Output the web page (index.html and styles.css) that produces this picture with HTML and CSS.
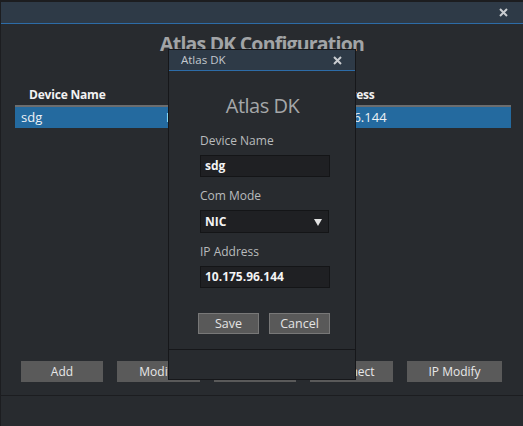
FILE: index.html
```html
<!DOCTYPE html>
<html>
<head>
<meta charset="utf-8">
<link rel="stylesheet" href="styles.css">
</head>
<body>
<div class="window">
  <div class="titlebar">
    <span class="close"><svg width="9" height="9" viewBox="0 0 9 9"><path d="M1 1L8 8M8 1L1 8" stroke="#c9ccd0" stroke-width="2"/></svg></span>
  </div>
  <div class="main">
    <h1 class="main-title">Atlas DK Configuration</h1>
    <div class="table">
      <div class="thead">
        <div class="c1">Device Name</div>
        <div class="c2">Com Mode</div>
        <div class="c3">IP Address</div>
      </div>
      <div class="trow">
        <div class="c1">sdg</div>
        <div class="c2">NIC</div>
        <div class="c3">10.175.96.144</div>
      </div>
    </div>
    <div class="actions">
      <button class="btn w82">Add</button>
      <button class="btn w83">Modify</button>
      <button class="btn w82">Delete</button>
      <button class="btn w83">Connect</button>
      <button class="btn w95">IP Modify</button>
    </div>
  </div>
  <div class="statusbar"></div>

  <div class="dialog">
    <div class="dlg-title">
      <span class="dlg-name">Atlas DK</span>
      <span class="close small"><svg width="9" height="9" viewBox="0 0 9 9"><path d="M1 1L8 8M8 1L1 8" stroke="#c9ccd0" stroke-width="2"/></svg></span>
    </div>
    <div class="dlg-body">
      <h2 class="dlg-heading">Atlas DK</h2>
      <div class="label first">Device Name</div>
      <div class="field">sdg</div>
      <div class="label">Com Mode</div>
      <div class="field select">NIC<span class="arrow"></span></div>
      <div class="label">IP Address</div>
      <div class="field">10.175.96.144</div>
      <div class="dlg-buttons">
        <button class="dbtn">Save</button>
        <button class="dbtn">Cancel</button>
      </div>
    </div>
    <div class="dlg-footer"></div>
  </div>
</div>
</body>
</html>
```

FILE: styles.css
```css
* { box-sizing: border-box; }
html, body { margin: 0; padding: 0; }
body {
  background: #282b2f;
  font-family: "Open Sans", "Noto Sans", sans-serif;
  width: 523px;
  height: 426px;
  overflow: hidden;
}
.window {
  position: relative;
  width: 523px;
  height: 426px;
  border-top: 2px solid #1c1d20;
  border-left: 1px solid #1c1d20;
  display: flex;
  flex-direction: column;
}
.titlebar {
  height: 22px;
  background: #2e3a47;
  border-bottom: 1px solid #2d6ca8;
  display: flex;
  align-items: center;
  justify-content: flex-end;
  padding-right: 15px;
  flex: none;
}
.close { display: flex; align-items: center; }
.main {
  flex: 1;
  display: flex;
  flex-direction: column;
  border-bottom: 1px solid #1c1d20;
}
.main-title {
  margin: 6px 0 0;
  font-size: 19.5px;
  letter-spacing: -0.8px;
  line-height: 28px;
  font-weight: 700;
  color: #a2a4a6;
  text-align: center;
}
.table {
  margin: 26px 12px 0 14px;
}
.thead, .trow { display: flex; }
.thead {
  height: 23px;
  border-bottom: 2px solid #6c6d6e;
  font-size: 12px;
  letter-spacing: -0.2px;
  font-weight: 700;
  line-height: 21px;
  color: #f2f2f2;
}
.thead .c1 { padding-left: 14px; }
.thead .c2 { padding-left: 14px; }
.thead .c3 { padding-left: 24px; }
.trow {
  height: 21px;
  background: #246a9f;
  font-size: 13px;
  line-height: 21px;
  color: #eef2f6;
}
.trow .c1, .trow .c2 { padding-left: 6px; }
.trow .c3 { padding-left: 12px; }
.c1 { width: 145px; }
.c2 { width: 130px; }
.c3 { flex: 1; }
.actions {
  margin-top: auto;
  margin-bottom: 13px;
  margin-left: 20px;
  display: flex;
  gap: 14px;
}
.btn {
  height: 21px;
  border: none;
  background: #5a5a5a;
  color: #e8e8e8;
  font-family: "Open Sans", "Noto Sans", sans-serif;
  font-size: 12px;
  line-height: 21px;
  padding: 0;
}
.w82 { width: 82px; }
.w83 { width: 83px; }
.w95 { width: 95px; }
.statusbar {
  height: 30px;
  flex: none;
}

.dialog {
  position: absolute;
  left: 167px;
  top: 47px;
  width: 188px;
  height: 331px;
  background: #282b2f;
  border: 1px solid #16171a;
  display: flex;
  flex-direction: column;
}
.dlg-title {
  height: 21px;
  background: #2e3a47;
  border-bottom: 1px solid #2d6ca8;
  display: flex;
  align-items: center;
  justify-content: space-between;
  padding: 0 13px 0 12px;
  flex: none;
}
.dlg-name {
  font-size: 11.5px;
  color: #c3c8ce;
  line-height: 20px;
}
.dlg-body {
  flex: 1;
  padding: 0 25px 0 31px;
}
.dlg-heading {
  margin: 21px 0 0;
  font-size: 20px;
  letter-spacing: -0.5px;
  line-height: 28px;
  font-weight: 400;
  color: #a5a7a9;
  text-align: center;
  margin-right: 5px;
}
.label {
  font-size: 12px;
  line-height: 18px;
  color: #b9bbbd;
  margin-top: 10px;
}
.label.first { margin-top: 12px; }
.field {
  margin-top: 5px;
  height: 22px;
  width: 130px;
  background: #1f2023;
  border: 1px solid #141517;
  font-size: 12px;
  font-weight: 700;
  color: #f4f4f4;
  line-height: 20px;
  padding-left: 4px;
}
.field.select {
  height: 23px;
  width: 129px;
  line-height: 21px;
  position: relative;
}
.arrow {
  position: absolute;
  right: 6px;
  top: 8px;
  width: 0;
  height: 0;
  border-left: 4px solid transparent;
  border-right: 4px solid transparent;
  border-top: 7px solid #e2e2e2;
}
.dlg-buttons {
  margin-top: 25px;
  margin-left: -2px;
  display: flex;
  gap: 10px;
}
.dbtn {
  width: 61px;
  height: 21px;
  background: #595959;
  border: 1px solid #787878;
  color: #e4e4e4;
  font-family: "Open Sans", "Noto Sans", sans-serif;
  font-size: 12.5px;
  line-height: 19px;
  padding: 0;
}
.dlg-footer {
  height: 30px;
  border-top: 1px solid #16171a;
  flex: none;
}
```
